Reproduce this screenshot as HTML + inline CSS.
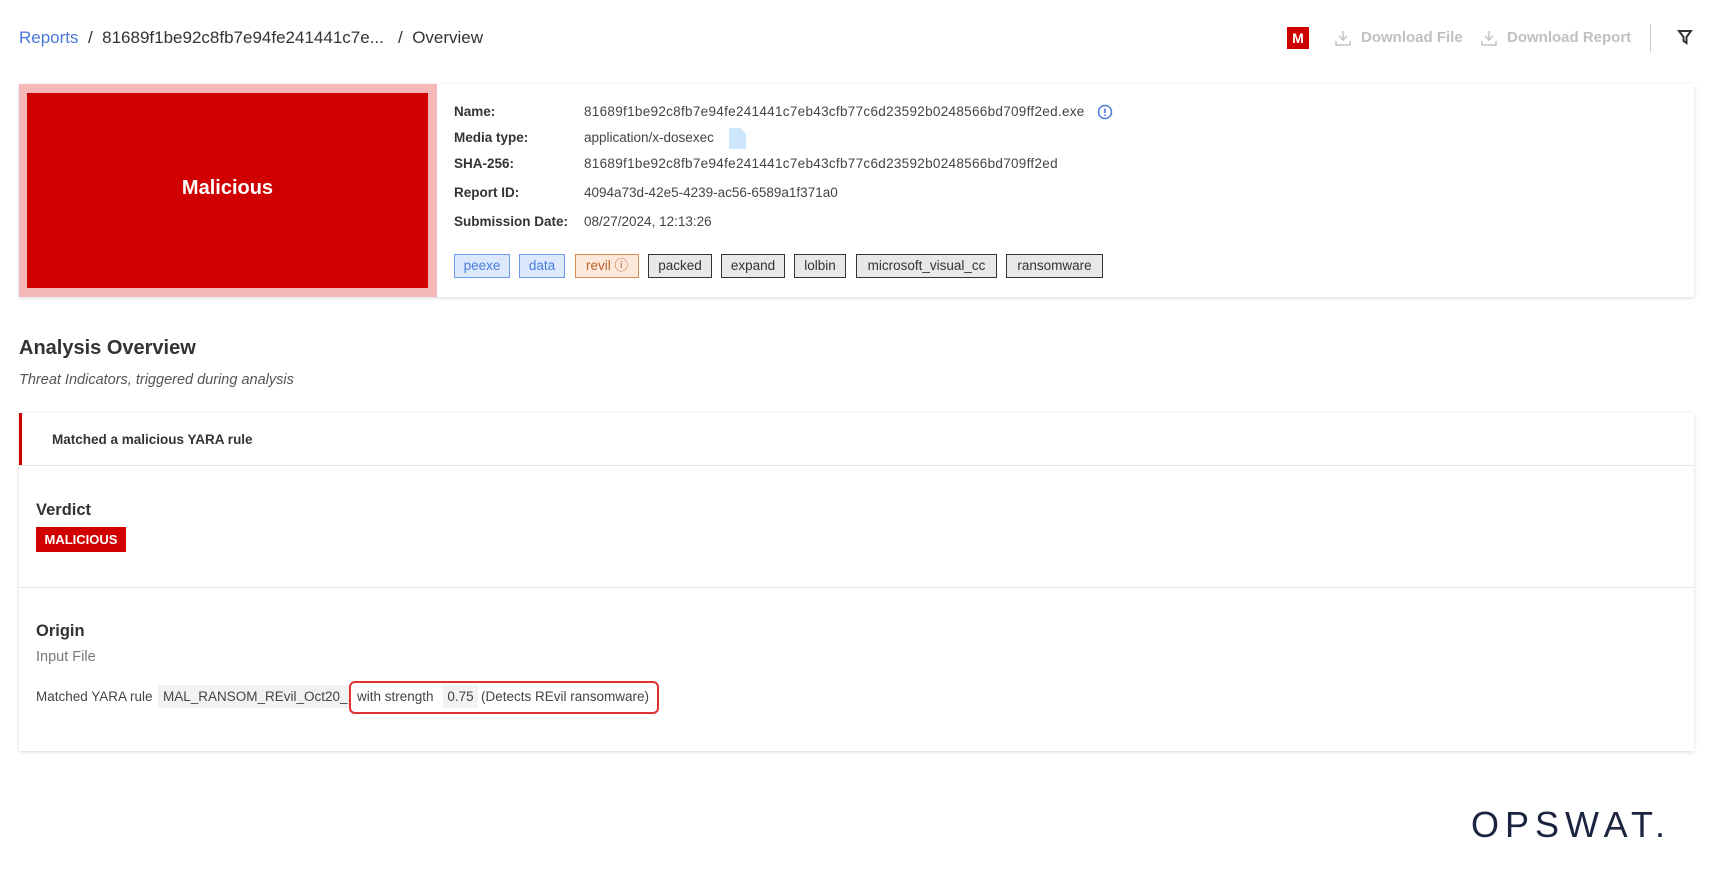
<!DOCTYPE html>
<html><head><meta charset="utf-8"><style>
*{box-sizing:border-box;margin:0;padding:0}
body{width:1712px;height:884px;background:#fff;font-family:"Liberation Sans",sans-serif;color:#333;position:relative;overflow:hidden}
.a{position:absolute;white-space:nowrap}
.lbl{font-size:13.5px;font-weight:bold;color:#333}
.val{font-size:13.5px;color:#444}
.tag{position:absolute;top:254px;height:24px;font-size:13.5px;line-height:22px;text-align:center;border:1px solid #333;background:#e8e8e8;color:#333}
.tb{background:#dce8fb;border-color:#6b9af0;color:#4a7de0}
.card{position:absolute;left:19px;width:1675px;background:#fff;box-shadow:0 1px 4px rgba(0,0,0,.15)}
</style></head><body>
<div class="a" style="left:19px;top:28px;font-size:17px;color:#333"><span style="color:#4a78d8">Reports</span>&nbsp; / &nbsp;81689f1be92c8fb7e94fe241441c7e...&nbsp;&nbsp; / &nbsp;Overview</div>
<div class="a" style="left:1287px;top:27px;width:22px;height:22px;background:#cc0000;color:#fff;font-weight:bold;font-size:14px;text-align:center;line-height:22px">M</div>
<svg class="a" style="left:1334px;top:29px" width="18" height="18" viewBox="0 0 18 18" fill="none" stroke="#c4c4c4" stroke-width="1.5"><path d="M9 2v9M5 7l4 4 4-4M2 12v4h14v-4"/></svg>
<div class="a" style="left:1361px;top:29px;font-size:15px;color:#c0c0c0;font-weight:bold">Download File</div>
<svg class="a" style="left:1480px;top:29px" width="18" height="18" viewBox="0 0 18 18" fill="none" stroke="#c4c4c4" stroke-width="1.5"><path d="M9 2v9M5 7l4 4 4-4M2 12v4h14v-4"/></svg>
<div class="a" style="left:1507px;top:29px;font-size:15px;color:#c0c0c0;font-weight:bold">Download Report</div>
<div class="a" style="left:1650px;top:24px;width:1px;height:28px;background:#ccc"></div>
<svg class="a" style="left:1677px;top:29px" width="16" height="16" viewBox="0 0 16 16" fill="none" stroke="#333" stroke-width="2"><path d="M2 2h12L9.5 8v6L6.5 12V8z"/></svg>

<div class="card" style="top:84px;height:213px"></div>
<div class="a" style="left:19px;top:84px;width:418px;height:213px;background:#f4b8b8"></div>
<div class="a" style="left:27px;top:93px;width:401px;height:195px;background:#d00000;color:#fff;font-weight:bold;font-size:20px;text-align:center;line-height:191px">Malicious</div>
<div class="a lbl" style="left:454px;top:104px">Name:</div><div class="a val" style="left:584px;top:104px;letter-spacing:0.3px">81689f1be92c8fb7e94fe241441c7eb43cfb77c6d23592b0248566bd709ff2ed.exe</div>
<svg class="a" style="left:1097px;top:104px" width="16" height="16" viewBox="0 0 16 16"><circle cx="8" cy="8" r="6.5" fill="none" stroke="#4a78d8" stroke-width="1.5"/><path d="M8 4.5v4.5M8 10.5v1.5" stroke="#4a78d8" stroke-width="1.6"/></svg>
<div class="a lbl" style="left:454px;top:130px">Media type:</div><div class="a val" style="left:584px;top:130px">application/x-dosexec</div>
<div class="a" style="left:729px;top:128px;width:17px;height:21px;background:#cde6fb;clip-path:polygon(0 0,70% 0,100% 30%,100% 100%,0 100%)"></div>
<div class="a lbl" style="left:454px;top:156px">SHA-256:</div><div class="a val" style="left:584px;top:156px;letter-spacing:0.3px">81689f1be92c8fb7e94fe241441c7eb43cfb77c6d23592b0248566bd709ff2ed</div>
<div class="a lbl" style="left:454px;top:185px">Report ID:</div><div class="a val" style="left:584px;top:185px">4094a73d-42e5-4239-ac56-6589a1f371a0</div>
<div class="a lbl" style="left:454px;top:214px">Submission Date:</div><div class="a val" style="left:584px;top:214px">08/27/2024, 12:13:26</div>
<div class="tag tb" style="left:454px;width:56px">peexe</div>
<div class="tag tb" style="left:519px;width:46px">data</div>
<div class="tag" style="left:575px;width:64px;background:#fde9dc;border-color:#e08a50;color:#c0622a">revil ⓘ</div>
<div class="tag" style="left:648px;width:64px">packed</div>
<div class="tag" style="left:721px;width:64px">expand</div>
<div class="tag" style="left:794px;width:52px">lolbin</div>
<div class="tag" style="left:856px;width:141px">microsoft_visual_cc</div>
<div class="tag" style="left:1006px;width:97px">ransomware</div>

<div class="a" style="left:19px;top:337px;font-size:20px;font-weight:bold;color:#333">Analysis Overview</div>
<div class="a" style="left:19px;top:372px;font-size:14.5px;font-style:italic;color:#555">Threat Indicators, triggered during analysis</div>

<div class="card" style="top:413px;height:338px"></div>
<div class="a" style="left:19px;top:413px;width:3px;height:52px;background:#c00"></div>
<div class="a" style="left:52px;top:432px;font-size:13.5px;font-weight:bold;color:#333">Matched a malicious YARA rule</div>
<div class="a" style="left:19px;top:465px;width:1675px;height:1px;background:#e6e6e6"></div>
<div class="a" style="left:36px;top:501px;font-size:16.5px;font-weight:bold;color:#333">Verdict</div>
<div class="a" style="left:36px;top:527px;width:90px;height:25px;background:#d00000;color:#fff;font-weight:bold;font-size:13px;text-align:center;line-height:25px">MALICIOUS</div>
<div class="a" style="left:19px;top:587px;width:1675px;height:1px;background:#e6e6e6"></div>
<div class="a" style="left:36px;top:622px;font-size:16.5px;font-weight:bold;color:#333">Origin</div>
<div class="a" style="left:36px;top:649px;font-size:14.5px;color:#777">Input File</div>
<div class="a" style="left:36px;top:689px;font-size:13.5px;color:#444">Matched YARA rule</div>
<div class="a" style="left:158px;top:685px;width:193px;height:23px;background:#f2f2f2;font-size:13.5px;line-height:23px;padding-left:5px;color:#444;overflow:hidden">MAL_RANSOM_REvil_Oct20_1</div>
<div class="a" style="left:349px;top:681px;width:310px;height:33px;border:2px solid #e03030;border-radius:6px"></div>
<div class="a" style="left:357px;top:689px;font-size:13.5px;color:#444">with strength</div>
<div class="a" style="left:443px;top:685px;width:35px;height:23px;background:#f2f2f2;font-size:13.5px;line-height:23px;text-align:center;color:#444">0.75</div>
<div class="a" style="left:481px;top:689px;font-size:13.5px;color:#444">(Detects REvil ransomware)</div>

<div class="a" style="left:1471px;top:805px;font-size:36px;letter-spacing:6px;color:#1b2440;line-height:40px">OPSWAT.</div>
</body></html>
